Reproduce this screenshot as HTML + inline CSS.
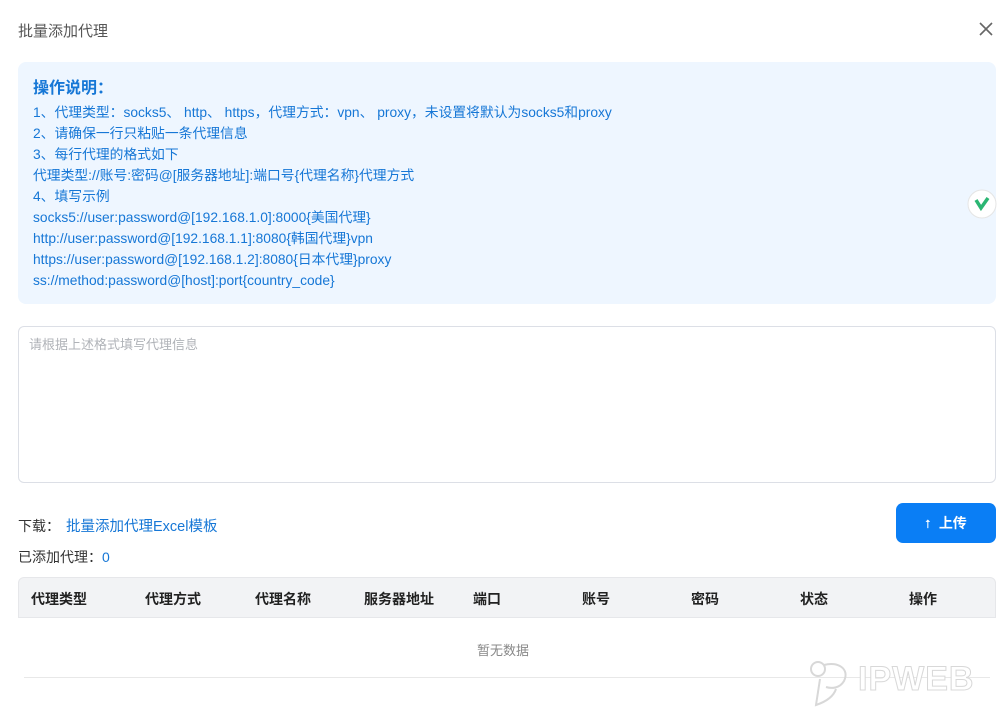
<!DOCTYPE html>
<html><head><meta charset="utf-8"><style>
*{box-sizing:border-box;margin:0;padding:0}
body{width:1006px;height:720px;background:#fff;font-family:"Liberation Sans","Noto Sans CJK SC",sans-serif;position:relative;overflow:hidden;color:#333}
.title{position:absolute;left:18px;top:20px;font-size:15px;color:#555}
.close{position:absolute;left:976px;top:19px;width:20px;height:20px}
.info{position:absolute;left:18px;top:62px;width:978px;height:242px;background:#eef6ff;border-radius:8px;padding:15px 15px;color:#1677d6}
.info h3{font-size:16px;font-weight:bold;margin-bottom:1px;line-height:24px}
.info p{font-size:13.8px;line-height:21px;white-space:nowrap}
.ta{position:absolute;left:18px;top:326px;width:978px;height:157px;border:1px solid #dcdfe6;border-radius:6px;padding:7px 10px;font-size:13px;color:#b0b3b8}
.dl{position:absolute;left:18px;top:515px;font-size:14px;color:#333}
.dl span{color:#1677d6;margin-left:6px;font-size:14.5px}
.cnt{position:absolute;left:18px;top:547px;font-size:14px}
.cnt span{color:#1677d6}
.btn{position:absolute;left:896px;top:503px;width:100px;height:40px;background:#0a7ef5;border-radius:7px;color:#fff;font-size:14px;font-weight:bold;text-align:center;line-height:40px}
.th{position:absolute;left:18px;top:577px;width:978px;height:41px;background:#f2f3f5;border:1px solid #e6e7ea;border-radius:6px 6px 0 0;font-size:14px;font-weight:bold;color:#222}
.th span{position:absolute;top:11px}
.empty{position:absolute;left:0;width:1006px;top:640px;text-align:center;font-size:13px;color:#888}
.line{position:absolute;left:24px;top:677px;width:966px;height:1px;background:#e8e8e8}
.wm{position:absolute;left:858px;top:660px;font-size:34px;font-weight:bold;color:#fff;-webkit-text-stroke:1px #d8d8d8;letter-spacing:1px}
</style></head><body>
<div class="title">批量添加代理</div>
<svg class="close" viewBox="0 0 20 20"><path d="M4 4L16 16M16 4L4 16" stroke="#666" stroke-width="1.6"/></svg>
<div class="info">
<h3>操作说明：</h3>
<p>1、代理类型：socks5、 http、 https，代理方式：vpn、 proxy，未设置将默认为socks5和proxy</p>
<p>2、请确保一行只粘贴一条代理信息</p>
<p>3、每行代理的格式如下</p>
<p>代理类型://账号:密码@[服务器地址]:端口号{代理名称}代理方式</p>
<p>4、填写示例</p>
<p>socks5://user:password@[192.168.1.0]:8000{美国代理}</p>
<p>http://user:password@[192.168.1.1]:8080{韩国代理}vpn</p>
<p>https://user:password@[192.168.1.2]:8080{日本代理}proxy</p>
<p>ss://method:password@[host]:port{country_code}</p>
</div>
<svg style="position:absolute;left:967px;top:189px" width="30" height="30" viewBox="0 0 30 30"><circle cx="15" cy="15" r="14" fill="#fff" stroke="#e5e5e5"/><path d="M9 11L14 19L21 9" stroke="#2bb673" stroke-width="3.5" fill="none"/></svg>
<div class="ta">请根据上述格式填写代理信息</div>
<div class="dl">下载：<span>批量添加代理Excel模板</span></div>
<div class="cnt">已添加代理：<span>0</span></div>
<div class="btn"><span style="font-weight:normal;font-size:12px;margin-right:8px">⭡</span>上传</div>
<div class="th">
<span style="left:12px">代理类型</span><span style="left:126px">代理方式</span><span style="left:236px">代理名称</span><span style="left:345px">服务器地址</span><span style="left:454px">端口</span><span style="left:563px">账号</span><span style="left:672px">密码</span><span style="left:781px">状态</span><span style="left:890px">操作</span>
</div>
<div class="empty">暂无数据</div>
<div class="line"></div>
<svg style="position:absolute;left:798px;top:655px" width="60" height="55" viewBox="0 0 60 55"><circle cx="20" cy="14" r="7" fill="none" stroke="#d8d8d8" stroke-width="2"/><path d="M26 10C40 6 52 14 46 26C42 33 34 34 28 32M22 24L18 50C30 46 36 40 38 34" fill="none" stroke="#d8d8d8" stroke-width="2"/></svg>
<div class="wm">IPWEB</div>
</body></html>
